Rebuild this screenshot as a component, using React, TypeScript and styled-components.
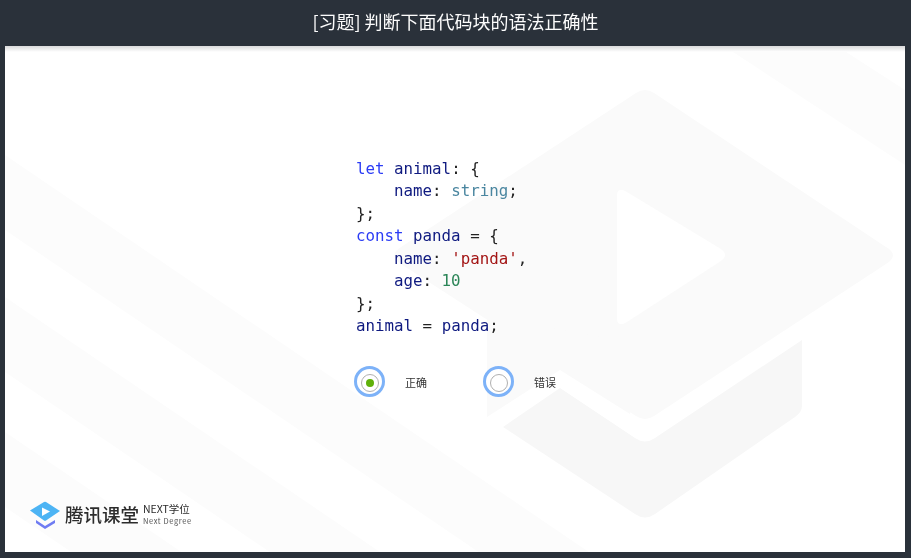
import React from 'react';
import styled, { createGlobalStyle } from 'styled-components';

const tokenColors = {
  keyword: '#2b3cf5',
  name: '#0f1a80',
  type: '#4a86a0',
  text: '#a31515',
  number: '#2b8557',
  plain: '#222222',
};

type TokenKind = keyof typeof tokenColors;
type CodeToken = [TokenKind, string];

const codeLines: CodeToken[][] = [
  [['keyword', 'let'], ['plain', ' '], ['name', 'animal'], ['plain', ': {']],
  [['name', '    name'], ['plain', ': '], ['type', 'string'], ['plain', ';']],
  [['plain', '};']],
  [['keyword', 'const'], ['plain', ' '], ['name', 'panda'], ['plain', ' = {']],
  [['name', '    name'], ['plain', ': '], ['text', "'panda'"], ['plain', ',']],
  [['name', '    age'], ['plain', ': '], ['number', '10']],
  [['plain', '};']],
  [['name', 'animal'], ['plain', ' = '], ['name', 'panda'], ['plain', ';']],
];

const options = [
  { label: '正确', checked: true },
  { label: '错误', checked: false },
];

const BackgroundArt = () => (
  <Art viewBox="0 0 900 506" preserveAspectRatio="none">
    <g fill="#fcfcfc">
      <polygon points="0,109 900,721 900,796 0,184" />
      <polygon points="0,251 900,863 900,938 0,326" />
      <polygon points="0,386 900,998 900,1073 0,461" />
      <polygon points="725,4 900,119 900,44 838,4" />
    </g>
    <path
      fill="#fafafa"
      d="M631 47 Q640 41 649 47 L881 201 Q895 209 881 218 L649 370 Q640 376 631 370 L396 218 Q383 209 396 201 Z"
    />
    <polygon points="482,269 482,371 555,324 625,368 640,300" fill="#fafafa" />
    <path
      fill="#ffffff"
      d="M612 150 Q612 140 622 146 L716 203 Q724 209 716 215 L622 276 Q612 282 612 272 Z"
    />
    <path
      fill="#f7f7f7"
      d="M498 381 L555 342 L630 392 Q640 399 650 392 L797 294 L797 360 Q797 366 790 371 L650 468 Q640 475 630 468 Z"
    />
  </Art>
);

const Logo = () => (
  <LogoRow>
    <svg width="32" height="29" viewBox="0 0 32 29">
      <path d="M7 19 L16 25 L26 19 L26 22 L16 28 L7 22 Z" fill="#6f7cf2" />
      <path d="M1 9.5 L15 1 Q16 .4 17 1 L31 10 L17 19.6 Q16 20.2 15 19.6 Z" fill="#4db4f4" />
      <path d="M13 6.5 L21 10.5 L13 15 Z" fill="#ffffff" />
    </svg>
    <LogoName>腾讯课堂</LogoName>
    <LogoTag>
      <LogoTagMain>NEXT学位</LogoTagMain>
      <LogoTagSub>Next Degree</LogoTagSub>
    </LogoTag>
  </LogoRow>
);

export default function App() {
  return (
    <Page>
      <GlobalStyle />
      <Header>
        <HeaderTitle>[习题] 判断下面代码块的语法正确性</HeaderTitle>
      </Header>
      <Stage>
        <BackgroundArt />
        <Question>
          <Code>
            {codeLines.map((line, index) => (
              <CodeLine key={index}>
                {line.map(([kind, value], tokenIndex) => (
                  <Token key={tokenIndex} $kind={kind}>{value}</Token>
                ))}
              </CodeLine>
            ))}
          </Code>
          <Options>
            {options.map((option) => (
              <Option key={option.label}>
                <RadioHalo>
                  <RadioRing>{option.checked && <RadioDot />}</RadioRing>
                </RadioHalo>
                <OptionLabel>{option.label}</OptionLabel>
              </Option>
            ))}
          </Options>
        </Question>
        <Logo />
      </Stage>
    </Page>
  );
}

const GlobalStyle = createGlobalStyle`
  html, body {
    margin: 0;
    padding: 0;
    background: #2a313a;
  }
`;

const Page = styled.div`
  display: flex;
  flex-direction: column;
  width: 911px;
  height: 558px;
  overflow: hidden;
  background: #2a313a;
  font-family: "Noto Sans CJK SC", "Noto Sans", sans-serif;
`;

const Header = styled.header`
  flex: 0 0 46px;
  line-height: 43px;
  text-align: center;
  font-size: 18px;
  color: #ffffff;
`;

const HeaderTitle = styled.span`
  display: inline-block;
  opacity: 0.99;
`;

const Stage = styled.main`
  position: relative;
  flex: 1;
  display: flex;
  flex-direction: column;
  margin: 0 6px 6px 5px;
  background: #ffffff;
  overflow: hidden;

  &::after {
    content: '';
    position: absolute;
    top: 0;
    left: 0;
    right: 0;
    height: 6px;
    background: linear-gradient(#d9dadb, #ffffff);
  }
`;

const Art = styled.svg`
  position: absolute;
  top: 0;
  left: 0;
  width: 100%;
  height: 100%;
`;

const Question = styled.section`
  position: relative;
  display: flex;
  flex-direction: column;
  padding: 111.5px 0 0 351px;
`;

const Code = styled.pre`
  margin: 0;
  font-family: "DejaVu Sans Mono", monospace;
  font-size: 15.8px;
  line-height: 22.5px;
  filter: blur(0.4px);
`;

const CodeLine = styled.div`
  height: 22.5px;
`;

const Token = styled.span<{ $kind: TokenKind }>`
  color: ${({ $kind }) => tokenColors[$kind]};
`;

const Options = styled.div`
  display: flex;
  margin: 28.5px 0 0 -2px;
`;

const Option = styled.label`
  display: flex;
  align-items: center;
  width: 129px;
`;

const RadioHalo = styled.span`
  display: flex;
  align-items: center;
  justify-content: center;
  box-sizing: border-box;
  width: 31px;
  height: 31px;
  padding-top: 3px;
  margin-right: 20px;
  border: 3px solid #7db2f8;
  border-radius: 50%;
  background: #ffffff;
  filter: blur(0.3px);
`;

const RadioRing = styled.span`
  display: flex;
  align-items: center;
  justify-content: center;
  box-sizing: border-box;
  width: 18px;
  height: 18px;
  border: 1px solid #b0b0b0;
  border-radius: 50%;
`;

const RadioDot = styled.span`
  width: 8px;
  height: 8px;
  border-radius: 50%;
  background: #5fb00a;
`;

const OptionLabel = styled.span`
  font-size: 11px;
  line-height: 16px;
  color: #333333;
  filter: blur(0.3px);
`;

const LogoRow = styled.div`
  position: relative;
  display: flex;
  align-items: center;
  margin: auto 0 22px 24px;
  color: #2c2c2c;
  filter: blur(0.4px);
`;

const LogoName = styled.span`
  margin-left: 4px;
  padding-bottom: 3px;
  font-size: 18.5px;
  line-height: 26px;
  font-weight: 500;
`;

const LogoTag = styled.div`
  display: flex;
  flex-direction: column;
  gap: 2px;
  margin-left: 4px;
  padding-bottom: 3px;
`;

const LogoTagMain = styled.span`
  font-size: 10.5px;
  line-height: 11px;
`;

const LogoTagSub = styled.span`
  font-size: 7.5px;
  line-height: 9px;
  letter-spacing: 0.6px;
  color: #555555;
`;
